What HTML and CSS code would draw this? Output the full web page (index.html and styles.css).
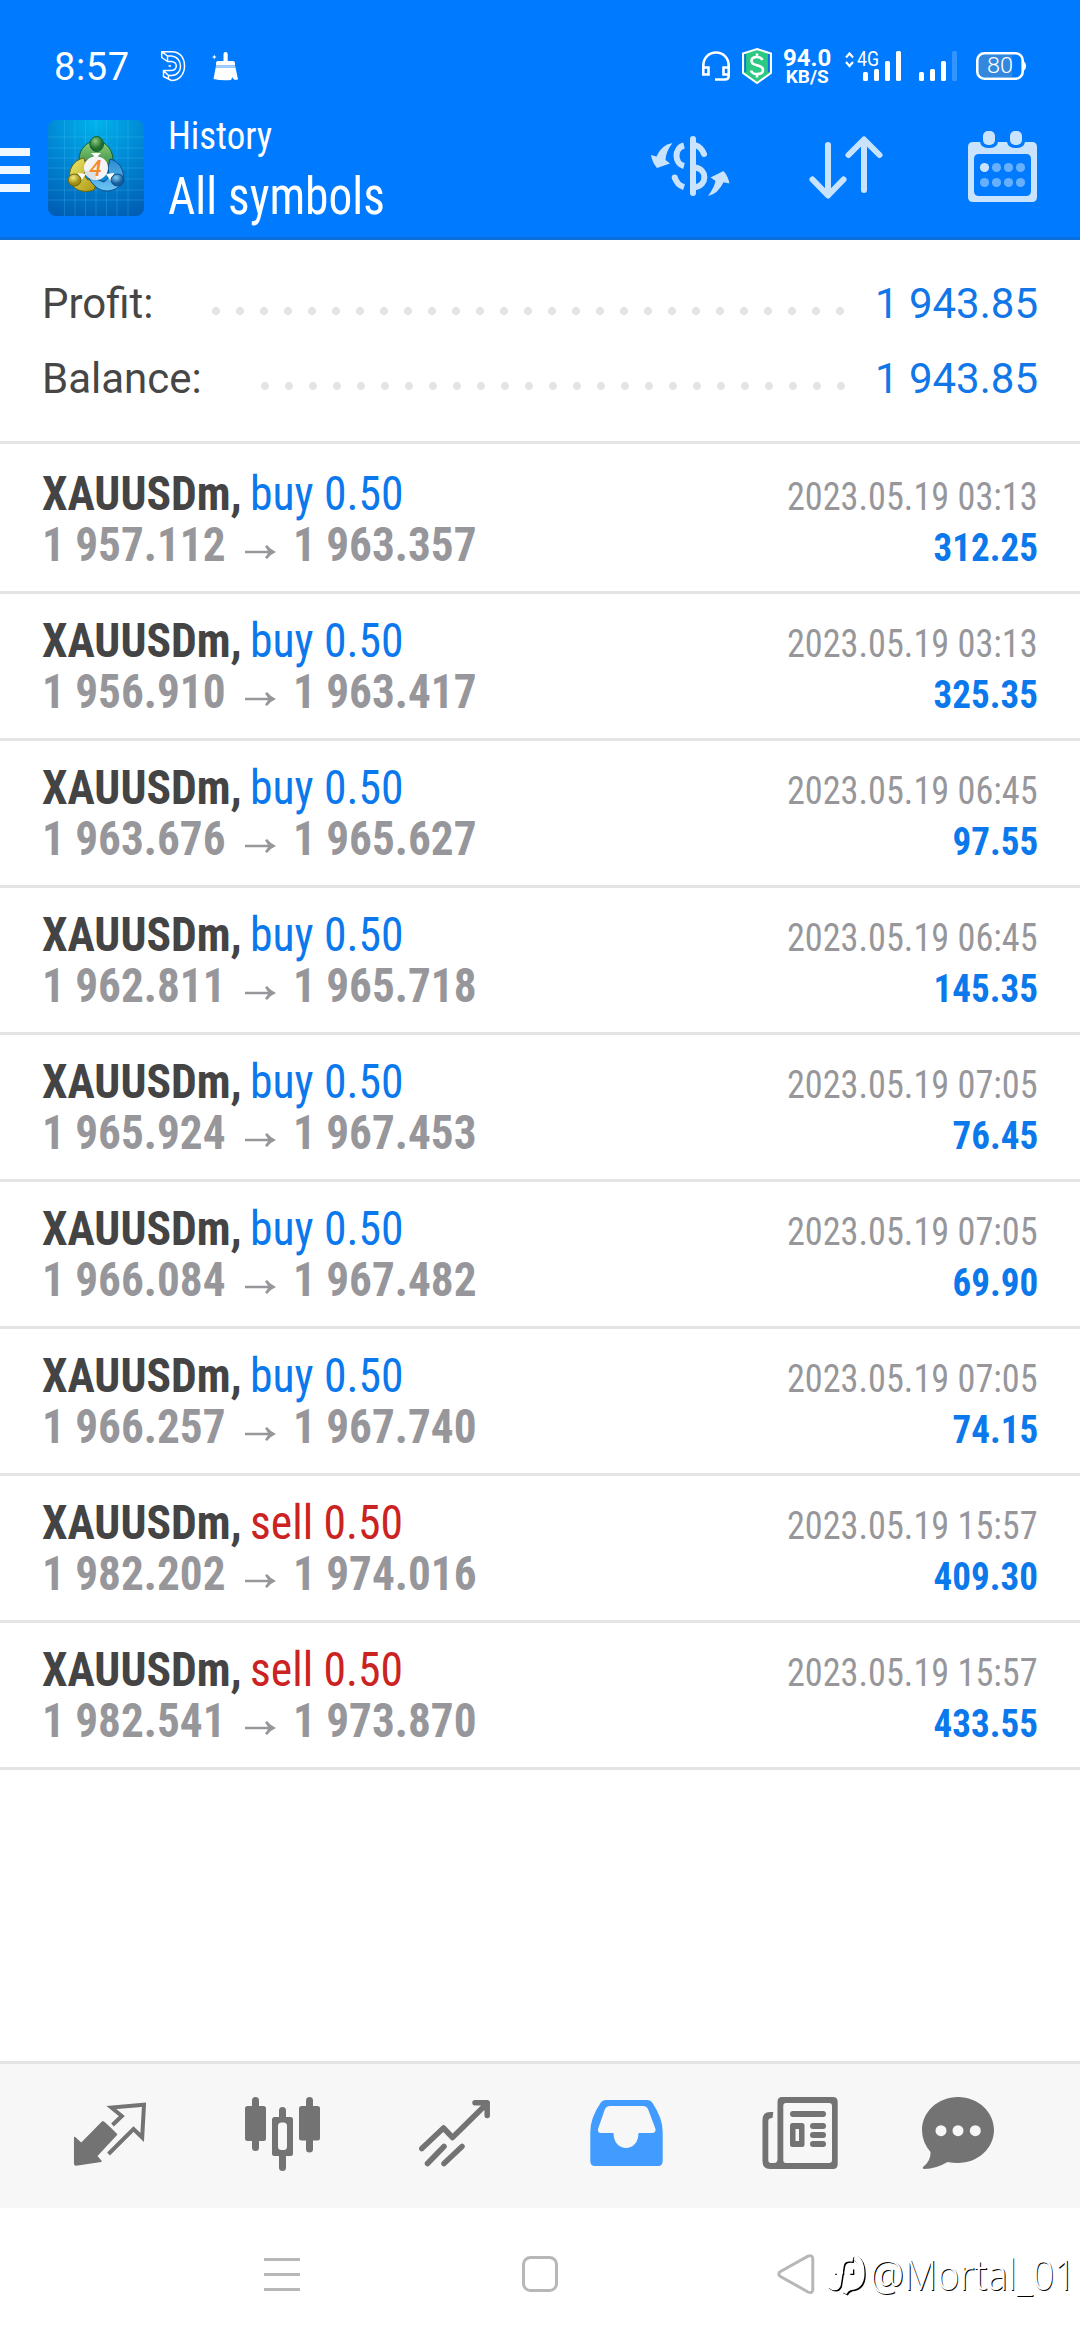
FILE: index.html
```
<!DOCTYPE html>
<html lang="en">
<head>
<meta charset="utf-8">
<title>History</title>
<link rel="stylesheet" href="styles.css">
</head>
<body>
<header class="header">
  <div class="status">
    <span class="clock">8:57</span>
    <svg class="st-d" width="25" height="30" viewBox="162 51 25 30" fill="none" stroke="#fff" stroke-width="1.500" stroke-linejoin="round"><path d="M162.700 51.700H173C181 51.700 185.500 58 185.500 66S180.500 80.500 172.500 80.500L164.500 76.500V70.500H172C179 70.500 179 61.500 172 61.500H168.500L162.700 57.500ZM162.700 51.700L168.500 56V61.500M168.500 56H172.500C184.500 57 184.500 75.500 172.500 75.500H169.500M164.500 70.500L169.500 75.500V79M169.500 66H172"/></svg>
    <svg class="st-broom" width="26" height="29" viewBox="212 52 26 29" fill="#fff"><path d="M223.500 54Q223.500 52 225.600 52T227.700 54V61H233Q235 61 235 63V65.200H216V63Q216 61 218 61H223.500ZM215.700 67.500H235.500L238 79.500Q233 80.800 232.500 77L231 80Q222 81 213.500 79ZM214.300 54.500L215 56.200 216.600 57 215 57.800 214.300 59.500 213.600 57.800 212 57 213.600 56.200Z"/><path d="M216 65.200H235L235.500 67.500H215.700Z" fill="#a9d2ff"/></svg>
    <svg class="st-head" width="28" height="30" viewBox="702 51 28 30" fill="none" stroke="#fff" stroke-width="2.600"><path d="M703.300 74V66C703.300 48 728.700 48 728.700 66V76Q728.700 79.500 725 79.500H715M703.300 67.500H708.500V74.500H703.300ZM728.700 67.500H723.500V74.500H728.700Z"/></svg>
    <svg class="st-shield" width="30" height="36" viewBox="742 48 30 36"><path d="M757 49L771 53.500V73L757 83 743 73V53.500Z" fill="#2cc982" stroke="#fff" stroke-width="2"/><path d="M745.200 54V72M768.800 54V72" stroke="#0876e8" stroke-width="1.800"/><path d="M762.500 60Q761 57 757 57Q751.500 57 751.500 61Q751.500 64 757 65.200Q763 66.500 763 70Q763 74 757 74Q752 74 751 70.500M757 53.500V57M757 74V77.500" fill="none" stroke="#fff" stroke-width="2.600"/></svg>
    <div class="speed"><b class="rate">94.0</b><b class="unit">KB/S</b></div>
    <svg class="st-sig" width="57" height="30" viewBox="845 51 57 30" fill="#fff"><path d="M846 57.500L849.500 53.500 853 57.500M846 62L849.500 66 853 62" fill="none" stroke="#fff" stroke-width="2.200"/><text class="net" x="857" y="65.700" textLength="22" lengthAdjust="spacingAndGlyphs">4G</text><rect x="863" y="72" width="5" height="9" rx="1.500"/><rect x="874" y="69" width="5" height="12" rx="1.500"/><rect x="885" y="61" width="5" height="20" rx="1.500"/><rect x="896" y="51" width="5" height="30" rx="1.500"/></svg>
    <svg class="st-sig2" width="38" height="30" viewBox="919 51 38 30" fill="#fff"><rect x="919" y="72" width="5" height="9" rx="1.500"/><rect x="930" y="69" width="5" height="12" rx="1.500"/><rect x="941" y="61" width="5" height="20" rx="1.500"/><rect x="952" y="51" width="5" height="30" rx="1.500" fill="#3395ff"/></svg>
    <svg class="st-bat" width="50" height="28" viewBox="976 52 50 28"><rect x="979" y="55" width="33" height="22" fill="#3387dc"/><rect x="977.300" y="53.300" width="45.400" height="25.400" rx="7" fill="none" stroke="#fff" stroke-width="2.600"/><path d="M1023 61Q1026 62 1026 66T1023 71Z" fill="#fff"/><text class="bat" x="987" y="73.300" textLength="26" lengthAdjust="spacingAndGlyphs">80</text></svg>
  </div>
  <div class="toolbar">
    <svg class="menu" width="30" height="44" viewBox="0 148 30 44" fill="#f0f8ff"><path d="M0 148H30V156H0ZM0 166H30V174H0ZM0 184H30V192H0Z"/></svg>
    <svg class="logo" width="96" height="96" viewBox="0 0 96 96">
      <defs>
        <radialGradient id="bg" cx=".5" cy="0" r="1.050"><stop offset="0" stop-color="#00b4ec"/><stop offset=".5" stop-color="#0087d4"/><stop offset="1" stop-color="#005fb4"/></radialGradient>
        <linearGradient id="gr" x2="0" y2="1"><stop offset="0" stop-color="#8fd07a"/><stop offset="1" stop-color="#1f7a35"/></linearGradient>
        <linearGradient id="ye" x2="1" y2="1"><stop offset="0" stop-color="#f0e868"/><stop offset="1" stop-color="#a89410"/></linearGradient>
        <linearGradient id="bl" x2="0" y2="1"><stop offset="0" stop-color="#2a8ad0"/><stop offset="1" stop-color="#6cc4f4"/></linearGradient>
        <radialGradient id="gh" cx=".4" cy=".3"><stop offset="0" stop-color="#8ccc80"/><stop offset="1" stop-color="#226e30"/></radialGradient>
        <radialGradient id="yh" cx=".4" cy=".3"><stop offset="0" stop-color="#f4ec80"/><stop offset="1" stop-color="#a08c14"/></radialGradient>
        <radialGradient id="bh" cx=".4" cy=".3"><stop offset="0" stop-color="#86ccf4"/><stop offset="1" stop-color="#145e9e"/></radialGradient>
      </defs>
      <rect width="96" height="96" rx="8" fill="url(#bg)"/>
      <path d="M16.500 0V96M27 0V96M37.500 0V96M48 0V96M58.500 0V96M69 0V96M80 0V96M0 17H96M0 28H96M0 38H96M0 48H96M0 59H96M0 70H96M0 80H96" stroke="#5ad0ff" stroke-opacity=".22" fill="none"/>
      <g stroke-width="1">
        <path d="M31 40C31 28 40 21 48 21C58 21 66 30 65 43C64 49 61 52 57 54L54 38Q48 33 42 38L36 42Z" fill="url(#gr)" stroke="#14602c"/>
        <path d="M36 38C25 40 20 50 22 60C24 69 34 74 46 70L50 58 40 60Q34 56 38 46Z" fill="url(#ye)" stroke="#6c640c"/>
        <path d="M62 39C71 41 77 50 75 60C72 70 58 75 48 67Q42 62 40 56L56 62Q63 58 60 48Z" fill="url(#bl)" stroke="#0d4c88"/>
        <path d="M43 33H53L48 38ZM30 53L38 54 32 62ZM66 53L58 54 64 63Z" fill="#fff"/>
        <ellipse cx="48.700" cy="24" rx="6.800" ry="7.500" fill="url(#gh)" stroke="#14602c"/>
        <ellipse cx="26.500" cy="60" rx="6.500" ry="6" fill="url(#yh)" stroke="#6c640c"/>
        <ellipse cx="69.500" cy="60" rx="6.500" ry="6" fill="url(#bh)" stroke="#0d4c88"/>
      </g>
      <circle cx="48" cy="48" r="12" fill="#f4f4f5"/>
      <path d="M36.300 51L48 49.500V60A12 12 0 0 1 36.300 51Z" fill="#dedfe2"/>
      <text class="four" x="41.500" y="56">4</text>
    </svg>
    <div class="titles"><span class="title">History</span><span class="subtitle">All symbols</span></div>
    <div class="actions">
      <svg width="79" height="61" viewBox="651 136 79 61" fill="#c9e3fc"><rect x="690" y="136" width="6" height="60" rx="3"/><path d="M684 145.500C674 148 674 163.500 684 166M674.800 177.500Q677 185 684 187.200" fill="none" stroke="#c9e3fc" stroke-width="6"/><circle cx="674.700" cy="177.500" r="3"/><path d="M695 145Q701.500 147 704 154" fill="none" stroke="#c9e3fc" stroke-width="6" stroke-linecap="round"/><path d="M695 167.500C707.500 169 707.500 185.500 695 187.200" fill="none" stroke="#c9e3fc" stroke-width="6"/><path d="M672.500 143Q661 145 656.500 156.500L651 155Q652 162 657 168L670 163.500 665.500 160Q666 151 672.500 143ZM708 196Q714 188 715.500 181L710.500 177.500 723.500 171Q728 176 729.500 183.500L723.500 182.300Q718 194 708 196Z"/></svg>
      <svg class="sort" width="74" height="64" viewBox="809 136 74 64" fill="none" stroke="#c9e3fc" stroke-width="6" stroke-linecap="round" stroke-linejoin="round"><path d="M828 145V195M812.500 179.500L828 195.500 843.500 179.500M864 190V140M848.500 155L864 139.500 879.500 155"/></svg>
      <svg class="cal" width="69" height="71" viewBox="968 131 69 71"><path fill="#c9e3fc" fill-rule="evenodd" d="M973 142H980Q981 148 989 148T998 142H1007Q1008 148 1016 148T1025 142H1032Q1037 142 1037 147V197Q1037 202 1032 202H973Q968 202 968 197V147Q968 142 973 142ZM979 154Q974 154 974 159V191Q974 196 979 196H1026Q1031 196 1031 191V159Q1031 154 1026 154Z"/><rect x="983" y="131" width="12" height="14" rx="5" fill="#c9e3fc"/><rect x="1010" y="131" width="12" height="14" rx="5" fill="#c9e3fc"/><circle cx="984.500" cy="167.500" r="4.600" fill="#c9e3fc"/><g fill="#66b0ff"><circle cx="996.500" cy="167.500" r="4.600"/><circle cx="1008.500" cy="167.500" r="4.600"/><circle cx="1020.500" cy="167.500" r="4.600"/><circle cx="984.500" cy="182.500" r="4.600"/><circle cx="996.500" cy="182.500" r="4.600"/><circle cx="1008.500" cy="182.500" r="4.600"/><circle cx="1020.500" cy="182.500" r="4.600"/></g></svg>
    </div>
  </div>
</header>
<section class="summary">
  <div class="sum-row"><span class="sum-label profit">Profit:</span><i class="dots"></i><span class="sum-value">1 943.85</span></div>
  <div class="sum-row"><span class="sum-label balance">Balance:</span><i class="dots wide"></i><span class="sum-value">1 943.85</span></div>
</section>
<main class="list" id="list"></main>
<nav class="tabs">
  <svg class="tab-quotes" width="72" height="64" viewBox="74 2103 72 64"><path fill="#737373" stroke="#737373" stroke-width="1.500" stroke-linejoin="round" d="M74.700 2137.500L81.300 2143.500 102.700 2121.800Q104 2121.800 116.500 2134.500L96.500 2156 101 2161.200 76 2165Q74.700 2165 74.700 2163.500Z"/><path fill="none" stroke="#737373" stroke-width="4" d="M112.500 2125L121.800 2116 111.500 2107.500 144 2104.800 142.200 2137.500 133.500 2129 108.500 2154"/></svg>
  <svg class="tab-charts" width="75" height="74" viewBox="244 2097 75 74" fill="#737373"><rect x="244" y="2106" width="21" height="35" rx="2.500"/><rect x="251" y="2097" width="7" height="54" rx="3.500"/><rect x="298" y="2106" width="21" height="34.500" rx="2.500"/><rect x="305" y="2097" width="7" height="55.500" rx="3.500"/><rect x="278" y="2107" width="7" height="64" rx="3.500"/><rect x="271" y="2117" width="21" height="39" rx="2.500"/><rect x="277" y="2122.500" width="9" height="27.500" rx="3.500" fill="#f7f7f7"/></svg>
  <svg width="72" height="66" viewBox="418 2100 72 66" overflow="visible" fill="none" stroke="#737373" stroke-width="5.500" stroke-linecap="round" stroke-linejoin="round"><path d="M420.800 2148.500L442.500 2128 451.500 2137.500 486 2103.500M474 2102.800H486.200V2115.500"/><path d="M426.500 2163.500L443 2146.500M443 2163.500L461 2146.500"/></svg>
  <svg width="73" height="66" viewBox="590 2100 73 66"><path fill="#429bff" fill-rule="evenodd" d="M606 2100H647Q650.500 2100 652.500 2103Q662.700 2118 662.700 2132V2161Q662.700 2166 658 2166H595Q590.300 2166 590.300 2161V2132Q590.300 2118 600.500 2103Q602.500 2100 606 2100ZM610 2106Q606.500 2106 605 2109L598 2129Q597.500 2133 601 2133H613.500C613.500 2153 638.500 2153 638.500 2133H652Q656 2133 655.500 2129L648 2109Q646.500 2106 643 2106Z"/></svg>
  <svg width="76" height="72" viewBox="762 2097 76 72" fill="#737373"><path fill-rule="evenodd" d="M782 2097H833Q837.700 2097 837.700 2102V2164Q837.700 2169 833 2169H770Q762.500 2169 762.500 2161V2120Q762.500 2112 770 2112H773.300L772.500 2118Q768.300 2118 768.300 2121V2160Q768.300 2163 771 2163H774Q777.500 2163 777.500 2159V2102Q777.500 2097 782 2097ZM786 2103Q783.300 2103 783.300 2106V2160Q783.300 2163 786 2163H829Q832 2163 832 2160V2106Q832 2103 829 2103Z"/><rect x="790" y="2111" width="36" height="6" rx="3"/><path fill-rule="evenodd" d="M792.500 2123H802Q804.500 2123 804.500 2125.500V2144.500Q804.500 2147 802 2147H792.500Q790 2147 790 2144.500V2125.500Q790 2123 792.500 2123ZM795.500 2129V2141H799V2129Z"/><rect x="810" y="2123" width="16" height="6" rx="3"/><rect x="810" y="2132" width="16" height="6" rx="3"/><rect x="810" y="2141" width="16" height="6" rx="3"/></svg>
  <svg class="tab-chat" width="72" height="72" viewBox="922 2097 72 72"><path fill="#737373" d="M958 2097C978 2097 994 2112 994 2130S978 2163 958 2163Q952 2163 947.500 2162Q937 2168.500 924 2169Q922 2168.500 923 2167Q931 2161 930.500 2152Q922 2142 922 2130C922 2112 938 2097 958 2097Z"/><g fill="#f7f7f7"><circle cx="941" cy="2130.700" r="5.500"/><circle cx="958" cy="2130.700" r="5.500"/><circle cx="975.300" cy="2130.700" r="5.500"/></g></svg>
</nav>
<footer class="sysnav">
  <svg class="recent" width="36" height="33" viewBox="0 0 36 33" fill="#b7b7b7"><path d="M0 0H36V3H0ZM0 15H36V18H0ZM0 30H36V33H0Z"/></svg>
  <svg class="home" width="36" height="36" viewBox="0 0 36 36"><rect x="1.500" y="1.500" width="33" height="33" rx="7" fill="none" stroke="#b7b7b7" stroke-width="3"/></svg>
  <svg class="back" width="38" height="40" viewBox="777 2254 38 40"><path d="M780.500 2271.500L808 2256.200Q812.500 2254.500 812.800 2259V2289.500Q812.500 2294 808 2292L780.500 2276.500Q777 2274 780.500 2271.500Z" fill="none" stroke="#b7b7b7" stroke-width="3"/></svg>
  <div class="mark">
    <svg width="38" height="46" viewBox="826 2258 38 46" fill="none" stroke-width="5.500"><g stroke="#000" transform="translate(1.300 1.300)"><path d="M853 2266Q842 2264 841 2273L838 2292Q836 2297 829 2292M834 2278H843M849 2278H853M855 2264Q863 2269 861.500 2284Q860 2294 850 2294.500Q846 2296 844 2300"/></g><g stroke="#fff"><path d="M853 2266Q842 2264 841 2273L838 2292Q836 2297 829 2292M834 2278H843M849 2278H853M855 2264Q863 2269 861.500 2284Q860 2294 850 2294.500Q846 2296 844 2300"/></g></svg>
    <span class="handle">@Mortal_01</span>
  </div>
</footer>
<script src="app.js"></script>
</body>
</html>
```
FILE: app.js
```
const deals = [
  ["buy", "1 957.112", "1 963.357", "03:13", "312.25"],
  ["buy", "1 956.910", "1 963.417", "03:13", "325.35"],
  ["buy", "1 963.676", "1 965.627", "06:45", "97.55"],
  ["buy", "1 962.811", "1 965.718", "06:45", "145.35"],
  ["buy", "1 965.924", "1 967.453", "07:05", "76.45"],
  ["buy", "1 966.084", "1 967.482", "07:05", "69.90"],
  ["buy", "1 966.257", "1 967.740", "07:05", "74.15"],
  ["sell", "1 982.202", "1 974.016", "15:57", "409.30"],
  ["sell", "1 982.541", "1 973.870", "15:57", "433.55"],
];
document.getElementById("list").innerHTML = deals.map(([side, open, close, time, profit]) => `
  <article class="deal">
    <div class="line">
      <span class="symbol">XAUUSDm,</span><span class="side ${side}">${side} 0.50</span>
      <span class="date">2023.05.19 ${time}</span>
    </div>
    <div class="line">
      <span class="price">${open}</span>
      <svg class="arrow" width="31" height="14" viewBox="0 0 31 14"><path d="M0 5.700H23L20 1.500 22 0Q26 5 31 7Q26 9 22 14L20 12.500 23 8.300H0Z" fill="#97979b"/></svg>
      <span class="price">${close}</span>
      <span class="profit-value">${profit}</span>
    </div>
  </article>`).join("");
```
FILE: styles.css
```
* { box-sizing: border-box; }
body {
  margin: 0;
  width: 1080px;
  height: 2340px;
  display: flex;
  flex-direction: column;
  overflow: hidden;
  background: #fff;
  font-family: Roboto, "Noto Sans", sans-serif;
}
svg { display: block; flex: none; overflow: visible; }

.header {
  height: 240px;
  flex: none;
  background: #007aff;
  border-bottom: 3px solid #0a6fdd;
  color: #fff;
}
.status { height: 108px; display: flex; align-items: flex-start; padding: 48px 54px 0 54px; }
.clock { width: 108px; font-size: 38px; line-height: 38px; letter-spacing: .6px; white-space: nowrap; }
.st-d { margin-top: 3px; }
.st-broom { margin: 4px 0 0 26px; }
.st-head { margin: 3px 0 0 464px; }
.st-shield { margin-left: 12px; }
.speed { width: 50px; margin-left: 10px; display: flex; flex-direction: column; align-items: center; }
.rate { font-size: 24px; line-height: 20px; }
.unit { font-size: 19px; line-height: 17px; }
.st-sig { margin: 3px 0 0 13px; }
.st-sig2 { margin: 3px 0 0 17px; }
.st-bat { margin: 4px 0 0 19px; }
.net { font: 400 20px Roboto, sans-serif; }
.bat { font: 300 22px Roboto, sans-serif; fill: #fff; }

.toolbar { display: flex; align-items: flex-start; }
.menu { margin-top: 40px; }
.logo { margin: 12px 0 0 18px; }
.four { font: italic 500 22px Roboto, sans-serif; fill: #f58a2c; }
.titles {
  margin: 5px 0 0 24px;
  display: flex;
  flex-direction: column;
  align-items: flex-start;
  font-family: "Roboto Condensed", Roboto, sans-serif;
  font-weight: 450;
  white-space: nowrap;
}
.title { font-size: 39px; line-height: 46px; transform: scaleX(.945); transform-origin: left; }
.subtitle { margin-top: 8px; font-size: 51px; line-height: 60px; transform: scaleX(.93); transform-origin: left; }
.actions { display: flex; align-items: flex-start; margin: 23px 43px 0 auto; }
.actions svg { margin-top: 5px; }
.actions .sort { margin-left: 79px; }
.actions .cal { margin: 0 0 0 85px; }

.summary { height: 204px; flex: none; padding: 26px 42px 0; border-bottom: 3px solid #e4e4e4; }
.sum-row { display: flex; height: 75px; line-height: 75px; font-size: 42px; color: #464646; white-space: nowrap; }
.profit { width: 162px; }
.balance { width: 211px; }
.dots { width: 648px; height: 24px; margin-top: 33px; background: radial-gradient(circle, #e4e4e4 3.6px, transparent 4.4px) 0 0 / 24px 24px; }
.dots.wide { width: 600px; }
.sum-value { margin-left: auto; color: #1177e8; }

.list { flex: 1; padding-top: 3px; font-family: "Roboto Condensed", Roboto, sans-serif; }
.deal { height: 147px; padding: 21px 42px 0; border-bottom: 3px solid #e4e4e4; }
.line { display: flex; align-items: baseline; height: 51px; line-height: 51px; font-size: 48px; white-space: nowrap; }
.symbol, .side, .price { flex: none; transform: scaleX(.95); transform-origin: left; }
.symbol { width: 208px; font-weight: 700; color: #444; }
.side { font-weight: 430; }
.buy { color: #0b78ec; }
.sell { color: #cb2222; }
.price { width: 200px; font-weight: 700; color: #97979b; transform: scaleX(.942); }
.arrow { align-self: flex-start; margin: 26px 17px 0 3px; }
.date, .profit-value { margin-left: auto; font-size: 39px; transform: scaleX(.93); transform-origin: right; }
.date { color: #97979b; font-weight: 430; }
.profit-value { font-weight: 700; color: #0b78ec; transform: scaleX(.95); }

.tabs {
  height: 147px;
  flex: none;
  display: flex;
  align-items: center;
  gap: 99px;
  padding: 0 74px 6px;
  background: #f7f7f7;
  border-top: 3px solid #e4e4e4;
}
.tab-quotes { margin-top: 4px; }
.tab-charts { margin-top: 2px; }
.tab-chat { margin-left: -15px; }

.sysnav { height: 132px; flex: none; display: flex; align-items: center; padding: 0 0 0 264px; }
.home { margin-left: 222px; }
.back { margin-left: 219px; }
.mark { display: flex; align-items: center; margin-left: 11px; }
.handle {
  margin-left: 6px;
  font: 300 42px/60px "Noto Sans", sans-serif;
  color: #fff;
  text-shadow: 1px 1px 0 #000;
  white-space: nowrap;
  transform: scaleX(.905);
  transform-origin: left;
}
```
